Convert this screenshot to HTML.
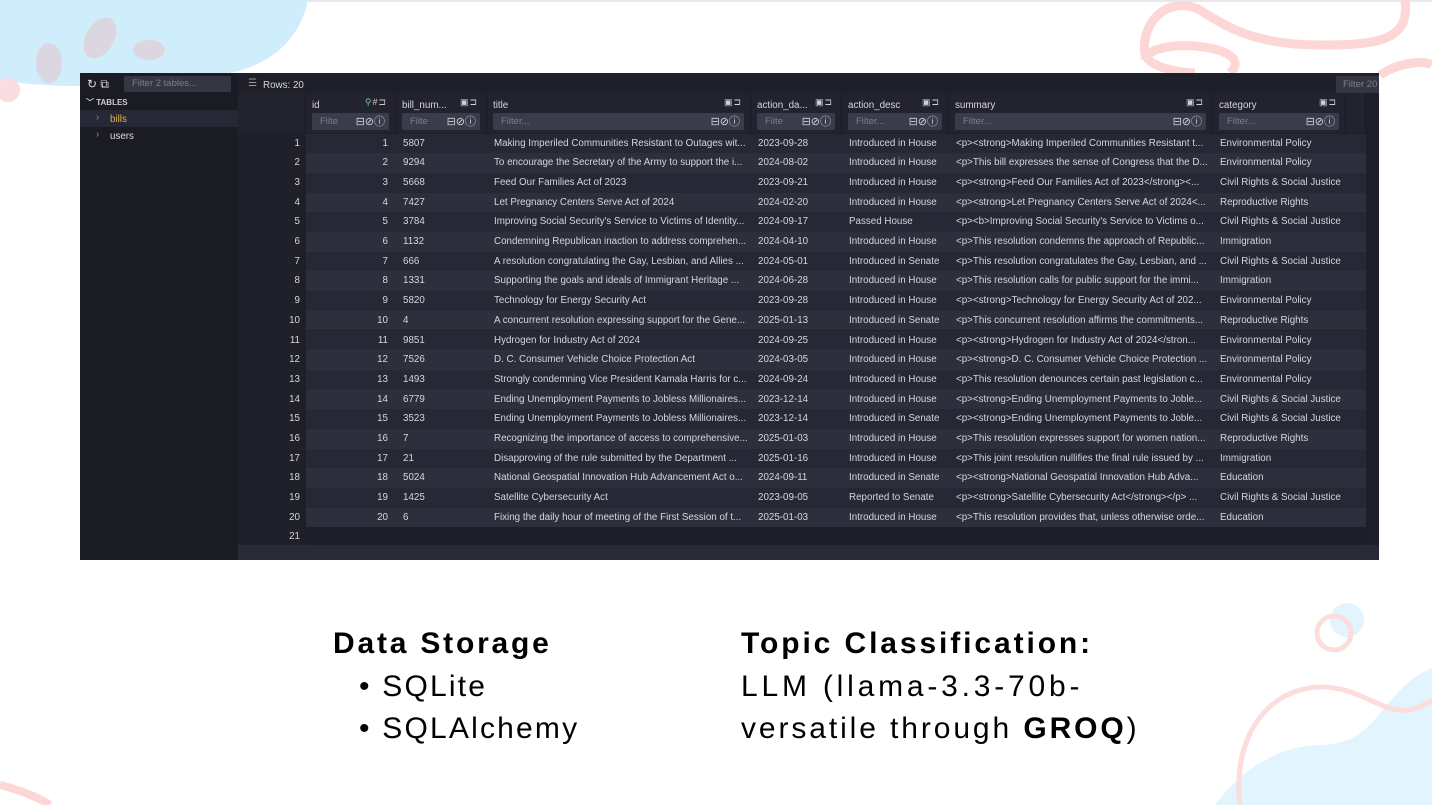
<!DOCTYPE html>
<html><head><meta charset="utf-8"><style>
*{margin:0;padding:0;box-sizing:border-box}
body{width:1432px;height:805px;overflow:hidden;background:#fff;position:relative;font-family:"Liberation Sans",sans-serif}
.bg{position:absolute;left:0;top:0}
#ss{position:absolute;left:80px;top:73px;width:1299px;height:487px;background:#1e1f28;overflow:hidden;font-size:9.8px;color:#d6d6dc}
.side{position:absolute;left:0;top:0;width:158px;height:487px;background:#1b1c23}
.r{position:absolute;left:158px;width:1128px;height:19.7px;line-height:20.5px;white-space:nowrap}
.r span{position:absolute;top:0;overflow:hidden}
.r .n{left:0;width:62px;text-align:right;background:#1f2029;height:100%}
.r .bgc{left:68px;width:1060px;height:100%}
.a .bgc{background:#262835}.b .bgc{background:#2d2f3d}
.i{left:100px;width:50px;text-align:right}
.c2{left:165px;width:85px}.c3{left:256px;width:258px}.c4{left:520px;width:88px}.c5{left:611px;width:104px}.c6{left:718px;width:258px}.c7{left:982px;width:130px}
.hd{position:absolute;top:20px;height:40px;background:#22232e;border-right:1px solid #1a1b22}
.hd b{font-weight:normal;position:absolute;left:6px;top:7px}
.fl{position:absolute;left:6px;right:6px;top:20px;height:17px;background:#3a3c4b;border-radius:2px;color:#7d7f8c;padding-left:8px;line-height:17px;font-size:9.5px}
.ic{position:absolute;right:8px;top:4px;color:#cfd0d8;font-size:9px;letter-spacing:1px}
.fi{position:absolute;right:4px;top:1px;font-size:11px;letter-spacing:0;color:#d0d0d8}
.txt{position:absolute;color:#000;font-family:"Liberation Sans",sans-serif;white-space:nowrap}
</style></head><body>
<svg class="bg" width="1432" height="805">
<rect x="0" y="0" width="1432" height="2" fill="#e8e8ee"/>
<path d="M0 0 H308 C300 40 270 65 230 73 H80 V86 C40 86 10 82 0 80Z" fill="#cfedfb"/>
<ellipse cx="49" cy="63" rx="13" ry="20" fill="#dcd6e0"/>
<ellipse cx="100" cy="38" rx="14" ry="22" transform="rotate(30 100 38)" fill="#dcd6e0"/>
<ellipse cx="149" cy="50" rx="16" ry="10" fill="#dcd6e0"/>
<ellipse cx="8" cy="90" rx="12" ry="12" fill="#f9dde0"/>
<path d="M1405 0 C1410 40 1380 45 1320 45 C1260 45 1230 30 1200 10 C1170 -5 1140 20 1145 55 C1150 65 1170 72 1195 73 M1230 73 C1260 45 1150 35 1145 60" stroke="#fdd6d6" stroke-width="9" fill="none"/>
<path d="M1380 75 C1400 62 1425 60 1432 65" stroke="#fdd6d6" stroke-width="9" fill="none"/>
<circle cx="1347" cy="620" r="17" fill="#e2f4fd"/>
<circle cx="1334" cy="633" r="17" stroke="#fddcdc" stroke-width="5" fill="none"/>
<path d="M1215 805 C1240 770 1280 745 1320 745 C1380 745 1380 690 1432 668 V805Z" fill="#e2f4fd"/>
<path d="M1240 805 C1232 740 1265 690 1318 687 C1370 685 1390 730 1432 700" stroke="#fddcdc" stroke-width="5" fill="none"/>
<path d="M0 785 C20 790 40 798 50 805" stroke="#fdd6d6" stroke-width="8" fill="none"/>
</svg>
<div id="ss">
<div class="side">
<div style="position:absolute;left:7px;top:4px;font-size:12px;color:#ddd">↻ ⧉</div>
<div style="position:absolute;left:44px;top:3px;width:107px;height:16px;background:#343643;border-radius:2px;color:#7d7f8c;font-size:9.5px;line-height:16px;padding-left:8px">Filter 2 tables...</div>
<div style="position:absolute;left:6px;top:24px;font-size:8px;font-weight:bold;color:#ccc">﹀ TABLES</div>
<div style="position:absolute;left:0;top:37px;width:158px;height:17px;background:#262835"></div>
<div style="position:absolute;left:16px;top:39px;color:#888">›</div><div style="position:absolute;left:30px;top:41px;color:#e3b54e">bills</div>
<div style="position:absolute;left:16px;top:56px;color:#888">›</div><div style="position:absolute;left:30px;top:58px;color:#ddd">users</div>
</div>
<div style="position:absolute;left:168px;top:5px;color:#999;font-size:10px">☰</div>
<div style="position:absolute;left:183px;top:7px">Rows: 20</div>
<div style="position:absolute;left:1256px;top:3px;width:50px;height:17px;background:#343643;color:#7d7f8c;line-height:17px;padding-left:7px;font-size:9.5px">Filter 20</div>
<div class="hd" style="left:158px;width:68px"></div>
<div class="hd" style="left:226px;width:90px"><b>id</b><span class="ic" style="color:#6fc7a0">⚲<span style="color:#ccc">#⊐</span></span><div class="fl">Filte<span class="fi">⊟⊘ⓘ</span></div></div>
<div class="hd" style="left:316px;width:91px"><b>bill_num...</b><span class="ic">▣⊐</span><div class="fl">Filte<span class="fi">⊟⊘ⓘ</span></div></div>
<div class="hd" style="left:407px;width:264px"><b>title</b><span class="ic">▣⊐</span><div class="fl">Filter...<span class="fi">⊟⊘ⓘ</span></div></div>
<div class="hd" style="left:671px;width:91px"><b>action_da...</b><span class="ic">▣⊐</span><div class="fl">Filte<span class="fi">⊟⊘ⓘ</span></div></div>
<div class="hd" style="left:762px;width:107px"><b>action_desc</b><span class="ic">▣⊐</span><div class="fl">Filter...<span class="fi">⊟⊘ⓘ</span></div></div>
<div class="hd" style="left:869px;width:264px"><b>summary</b><span class="ic">▣⊐</span><div class="fl">Filter...<span class="fi">⊟⊘ⓘ</span></div></div>
<div class="hd" style="left:1133px;width:133px"><b>category</b><span class="ic">▣⊐</span><div class="fl">Filter...<span class="fi">⊟⊘ⓘ</span></div></div>
<div class="hd" style="left:1266px;width:20px"></div>

<div class="r a" style="top:60.5px"><span class="n">1</span><span class="bgc"></span><span class="i">1</span><span class="c2">5807</span><span class="c3">Making Imperiled Communities Resistant to Outages wit...</span><span class="c4">2023-09-28</span><span class="c5">Introduced in House</span><span class="c6">&lt;p&gt;&lt;strong&gt;Making Imperiled Communities Resistant t...</span><span class="c7">Environmental Policy</span></div>
<div class="r b" style="top:80.2px"><span class="n">2</span><span class="bgc"></span><span class="i">2</span><span class="c2">9294</span><span class="c3">To encourage the Secretary of the Army to support the i...</span><span class="c4">2024-08-02</span><span class="c5">Introduced in House</span><span class="c6">&lt;p&gt;This bill expresses the sense of Congress that the D...</span><span class="c7">Environmental Policy</span></div>
<div class="r a" style="top:99.9px"><span class="n">3</span><span class="bgc"></span><span class="i">3</span><span class="c2">5668</span><span class="c3">Feed Our Families Act of 2023</span><span class="c4">2023-09-21</span><span class="c5">Introduced in House</span><span class="c6">&lt;p&gt;&lt;strong&gt;Feed Our Families Act of 2023&lt;/strong&gt;&lt;...</span><span class="c7">Civil Rights &amp; Social Justice</span></div>
<div class="r b" style="top:119.6px"><span class="n">4</span><span class="bgc"></span><span class="i">4</span><span class="c2">7427</span><span class="c3">Let Pregnancy Centers Serve Act of 2024</span><span class="c4">2024-02-20</span><span class="c5">Introduced in House</span><span class="c6">&lt;p&gt;&lt;strong&gt;Let Pregnancy Centers Serve Act of 2024&lt;...</span><span class="c7">Reproductive Rights</span></div>
<div class="r a" style="top:139.3px"><span class="n">5</span><span class="bgc"></span><span class="i">5</span><span class="c2">3784</span><span class="c3">Improving Social Security's Service to Victims of Identity...</span><span class="c4">2024-09-17</span><span class="c5">Passed House</span><span class="c6">&lt;p&gt;&lt;b&gt;Improving Social Security's Service to Victims o...</span><span class="c7">Civil Rights &amp; Social Justice</span></div>
<div class="r b" style="top:159px"><span class="n">6</span><span class="bgc"></span><span class="i">6</span><span class="c2">1132</span><span class="c3">Condemning Republican inaction to address comprehen...</span><span class="c4">2024-04-10</span><span class="c5">Introduced in House</span><span class="c6">&lt;p&gt;This resolution condemns the approach of Republic...</span><span class="c7">Immigration</span></div>
<div class="r a" style="top:178.7px"><span class="n">7</span><span class="bgc"></span><span class="i">7</span><span class="c2">666</span><span class="c3">A resolution congratulating the Gay, Lesbian, and Allies ...</span><span class="c4">2024-05-01</span><span class="c5">Introduced in Senate</span><span class="c6">&lt;p&gt;This resolution congratulates the Gay, Lesbian, and ...</span><span class="c7">Civil Rights &amp; Social Justice</span></div>
<div class="r b" style="top:198.4px"><span class="n">8</span><span class="bgc"></span><span class="i">8</span><span class="c2">1331</span><span class="c3">Supporting the goals and ideals of Immigrant Heritage ...</span><span class="c4">2024-06-28</span><span class="c5">Introduced in House</span><span class="c6">&lt;p&gt;This resolution calls for public support for the immi...</span><span class="c7">Immigration</span></div>
<div class="r a" style="top:218.1px"><span class="n">9</span><span class="bgc"></span><span class="i">9</span><span class="c2">5820</span><span class="c3">Technology for Energy Security Act</span><span class="c4">2023-09-28</span><span class="c5">Introduced in House</span><span class="c6">&lt;p&gt;&lt;strong&gt;Technology for Energy Security Act of 202...</span><span class="c7">Environmental Policy</span></div>
<div class="r b" style="top:237.8px"><span class="n">10</span><span class="bgc"></span><span class="i">10</span><span class="c2">4</span><span class="c3">A concurrent resolution expressing support for the Gene...</span><span class="c4">2025-01-13</span><span class="c5">Introduced in Senate</span><span class="c6">&lt;p&gt;This concurrent resolution affirms the commitments...</span><span class="c7">Reproductive Rights</span></div>
<div class="r a" style="top:257.5px"><span class="n">11</span><span class="bgc"></span><span class="i">11</span><span class="c2">9851</span><span class="c3">Hydrogen for Industry Act of 2024</span><span class="c4">2024-09-25</span><span class="c5">Introduced in House</span><span class="c6">&lt;p&gt;&lt;strong&gt;Hydrogen for Industry Act of 2024&lt;/stron...</span><span class="c7">Environmental Policy</span></div>
<div class="r b" style="top:277.2px"><span class="n">12</span><span class="bgc"></span><span class="i">12</span><span class="c2">7526</span><span class="c3">D. C. Consumer Vehicle Choice Protection Act</span><span class="c4">2024-03-05</span><span class="c5">Introduced in House</span><span class="c6">&lt;p&gt;&lt;strong&gt;D. C. Consumer Vehicle Choice Protection ...</span><span class="c7">Environmental Policy</span></div>
<div class="r a" style="top:296.9px"><span class="n">13</span><span class="bgc"></span><span class="i">13</span><span class="c2">1493</span><span class="c3">Strongly condemning Vice President Kamala Harris for c...</span><span class="c4">2024-09-24</span><span class="c5">Introduced in House</span><span class="c6">&lt;p&gt;This resolution denounces certain past legislation c...</span><span class="c7">Environmental Policy</span></div>
<div class="r b" style="top:316.6px"><span class="n">14</span><span class="bgc"></span><span class="i">14</span><span class="c2">6779</span><span class="c3">Ending Unemployment Payments to Jobless Millionaires...</span><span class="c4">2023-12-14</span><span class="c5">Introduced in House</span><span class="c6">&lt;p&gt;&lt;strong&gt;Ending Unemployment Payments to Joble...</span><span class="c7">Civil Rights &amp; Social Justice</span></div>
<div class="r a" style="top:336.3px"><span class="n">15</span><span class="bgc"></span><span class="i">15</span><span class="c2">3523</span><span class="c3">Ending Unemployment Payments to Jobless Millionaires...</span><span class="c4">2023-12-14</span><span class="c5">Introduced in Senate</span><span class="c6">&lt;p&gt;&lt;strong&gt;Ending Unemployment Payments to Joble...</span><span class="c7">Civil Rights &amp; Social Justice</span></div>
<div class="r b" style="top:356px"><span class="n">16</span><span class="bgc"></span><span class="i">16</span><span class="c2">7</span><span class="c3">Recognizing the importance of access to comprehensive...</span><span class="c4">2025-01-03</span><span class="c5">Introduced in House</span><span class="c6">&lt;p&gt;This resolution expresses support for women nation...</span><span class="c7">Reproductive Rights</span></div>
<div class="r a" style="top:375.7px"><span class="n">17</span><span class="bgc"></span><span class="i">17</span><span class="c2">21</span><span class="c3">Disapproving of the rule submitted by the Department ...</span><span class="c4">2025-01-16</span><span class="c5">Introduced in House</span><span class="c6">&lt;p&gt;This joint resolution nullifies the final rule issued by ...</span><span class="c7">Immigration</span></div>
<div class="r b" style="top:395.4px"><span class="n">18</span><span class="bgc"></span><span class="i">18</span><span class="c2">5024</span><span class="c3">National Geospatial Innovation Hub Advancement Act o...</span><span class="c4">2024-09-11</span><span class="c5">Introduced in Senate</span><span class="c6">&lt;p&gt;&lt;strong&gt;National Geospatial Innovation Hub Adva...</span><span class="c7">Education</span></div>
<div class="r a" style="top:415.1px"><span class="n">19</span><span class="bgc"></span><span class="i">19</span><span class="c2">1425</span><span class="c3">Satellite Cybersecurity Act</span><span class="c4">2023-09-05</span><span class="c5">Reported to Senate</span><span class="c6">&lt;p&gt;&lt;strong&gt;Satellite Cybersecurity Act&lt;/strong&gt;&lt;/p&gt; ...</span><span class="c7">Civil Rights &amp; Social Justice</span></div>
<div class="r b" style="top:434.8px"><span class="n">20</span><span class="bgc"></span><span class="i">20</span><span class="c2">6</span><span class="c3">Fixing the daily hour of meeting of the First Session of t...</span><span class="c4">2025-01-03</span><span class="c5">Introduced in House</span><span class="c6">&lt;p&gt;This resolution provides that, unless otherwise orde...</span><span class="c7">Education</span></div>
<div class="r" style="top:454.5px;height:18px;line-height:18px"><span class="n">21</span><span class="bgc" style="background:#1d1e27"></span></div>
<div style="position:absolute;left:158px;top:472px;width:1141px;height:15px;background:#282a37"></div>
</div>

<div class="txt" style="left:333px;top:627px;font-size:30px;font-weight:bold;letter-spacing:2.8px">Data Storage</div>
<div class="txt" style="left:359px;top:670px;font-size:30px;letter-spacing:2.2px">•&nbsp;SQLite</div>
<div class="txt" style="left:359px;top:712px;font-size:30px;letter-spacing:2.2px">•&nbsp;SQLAlchemy</div>
<div class="txt" style="left:741px;top:627px;font-size:30px;font-weight:bold;letter-spacing:2.9px">Topic Classification:</div>
<div class="txt" style="left:741px;top:670px;font-size:30px;letter-spacing:3.8px">LLM (llama-3.3-70b-</div>
<div class="txt" style="left:741px;top:712px;font-size:30px;letter-spacing:2.9px">versatile through <b>GROQ</b>)</div>
</body></html>
